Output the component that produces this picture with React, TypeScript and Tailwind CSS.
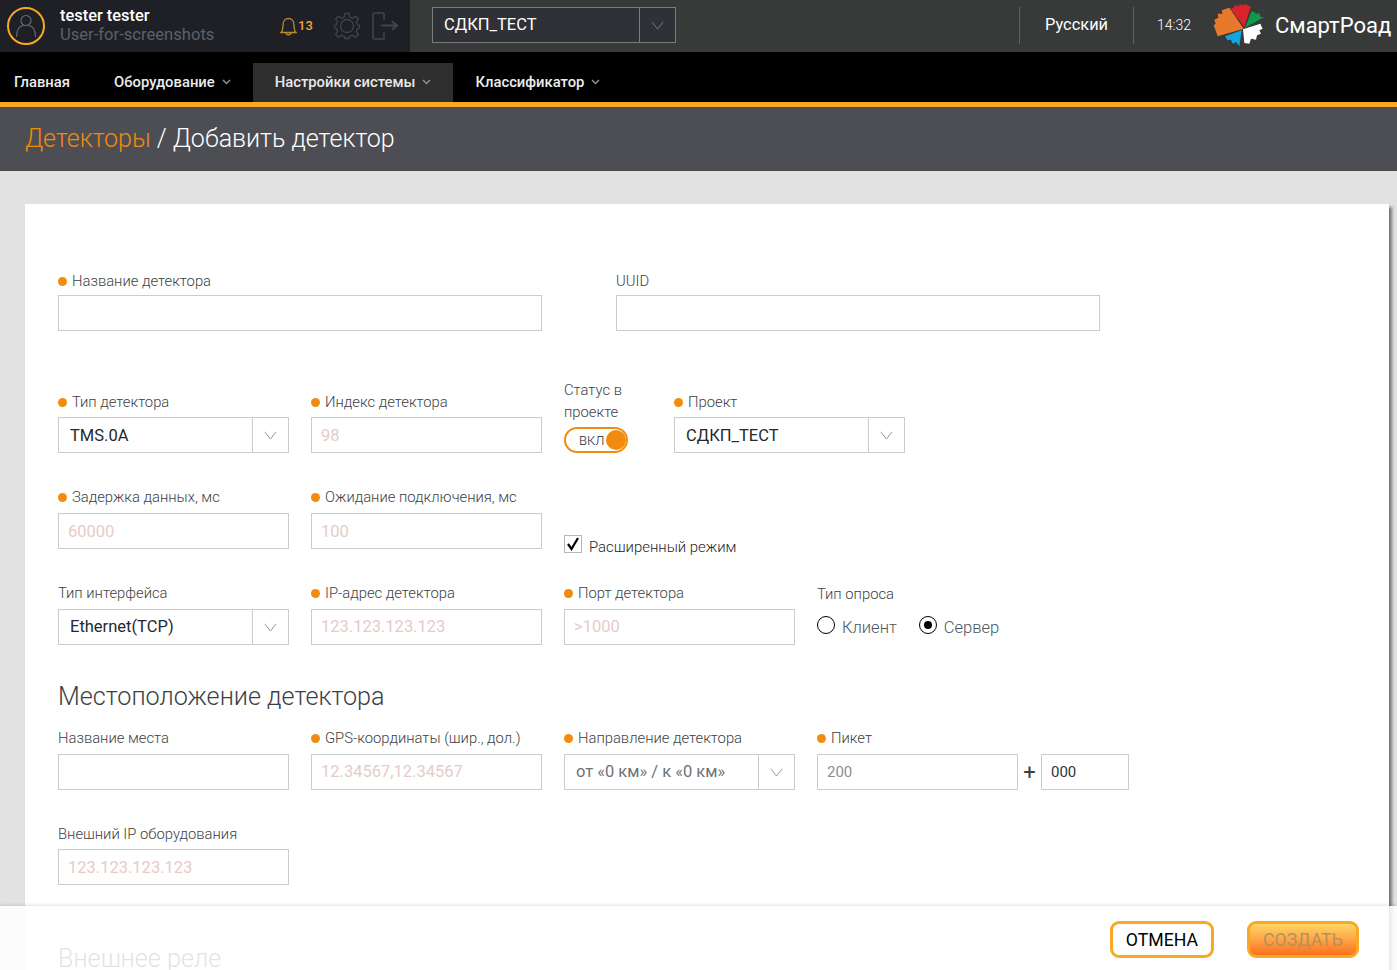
import React from "react";

const font = { fontFamily: '"Roboto", "Liberation Sans", sans-serif' };

function Chevron({ className = "" }: { className?: string }) {
  return (
    <svg width="13" height="9" viewBox="0 0 13 9" fill="none" className={className}>
      <path d="M0.8 0.8 L6.5 8 L12.2 0.8" stroke="currentColor" strokeWidth="0.9" />
    </svg>
  );
}

function SmallChevron() {
  return (
    <svg width="9" height="6" viewBox="0 0 9 6" fill="none" className="ml-[7px] mt-[-2px]">
      <path d="M1 1 L4.5 4.5 L8 1" stroke="#8f8f8f" strokeWidth="1.5" />
    </svg>
  );
}

function Label({ text, req, gap }: { text: string; req?: boolean; gap: string }) {
  return (
    <div className={`flex items-center h-[22px] text-[14.8px] font-light text-[#3d3f45] ${gap}`}>
      {req && <span className="w-[9px] h-[9px] rounded-full bg-[#f28c0f] mr-[5px]" />}
      <span className="pt-[1px]">{text}</span>
    </div>
  );
}

function Input({ value, tone = "ph", w = "w-[231px]", low }: { value?: string; tone?: "ph" | "gray" | "dark"; w?: string; low?: boolean }) {
  const color = tone === "ph" ? "text-[#e6cbc8] text-[16.5px]" : tone === "gray" ? "text-[#8b8e92] text-[15px]" : "text-[#2f3640] text-[15px]";
  return (
    <div className={`${w} h-[36px] border border-[#cccccc] bg-white flex items-center pl-[9px] font-normal ${low ? "pt-[3px]" : "pt-[1px]"} ${color}`}>
      {value}
    </div>
  );
}

function Select({ value, muted, w = "w-[231px]", low }: { value: string; muted?: boolean; w?: string; low?: boolean }) {
  return (
    <div className={`${w} h-[36px] border border-[#cccccc] bg-white flex items-center`}>
      <div className={`flex-1 pl-[11px] text-[16.5px] ${low ? "pt-[3px]" : "pt-[1px]"} ${muted ? "text-[#6f7276]" : "text-[#26282c]"}`}>{value}</div>
      <div className="w-[36px] h-full border-l border-[#cccccc] flex items-center justify-center text-[#8f8f8f]">
        <Chevron />
      </div>
    </div>
  );
}

function Field({ label, req, gap, children }: { label: string; req?: boolean; gap: string; children: React.ReactNode }) {
  return (
    <div>
      <Label text={label} req={req} gap={gap} />
      {children}
    </div>
  );
}

function Logo() {
  return (
    <svg width="52" height="44" viewBox="36 8 156 132" className="ml-[21px]">
      <polygon fill="#e8792b" points="128,85 85,22 62,30 65,40 50,40 52,52 40,58 44,70 38,75 42,85 50,108" />
      <polygon fill="#d9222a" points="130,80 88,25 100,22 100,15 115,18 115,12 130,14 130,10 150,20 145,32" />
      <polygon fill="#0f9a4b" points="132,82 152,33 160,35 165,41 175,38 178,50 190,50" />
      <polygon fill="#ffffff" points="126,87 178,70 185,85 175,90 180,100 168,105 165,118 150,115 145,130 130,128" />
      <polygon fill="#12a5df" points="122,90 72,108 80,120 90,118 95,130 105,125 115,138" />
    </svg>
  );
}

function TopBar() {
  return (
    <div className="h-[52px] flex bg-[#383a3a]">
      <div className="w-[410px] h-full bg-[#1e2025] flex items-center shrink-0">
        <div className="ml-[7px] w-[38px] h-[38px] rounded-full border-2 border-[#f9a825] flex items-center justify-center">
          <svg width="22" height="26" viewBox="0 0 22 26" fill="none" stroke="#6b6e72" strokeWidth="1.1">
            <circle cx="11" cy="7.5" r="5" />
            <path d="M1.5 24 C1.5 16 5 12.5 8.5 12.5 M20.5 24 C20.5 16 17 12.5 13.5 12.5" />
          </svg>
        </div>
        <div className="ml-[15px] w-[215px] pb-[2px] leading-[19px]">
          <div className="text-white font-medium text-[16.4px]">tester tester</div>
          <div className="text-[#5d6065] text-[16.6px]">User-for-screenshots</div>
        </div>
        <svg width="17" height="19" viewBox="0 0 17 19" fill="none" stroke="#b38a35" strokeWidth="1.3" className="ml-[5px]">
          <path d="M1 15.5 C3 13.5 3 11 3 8 C3 4 5.5 1.5 8.5 1.5 C11.5 1.5 14 4 14 8 C14 11 14 13.5 16 15.5 Z" />
          <path d="M6 15.5 C6 18.5 11 18.5 11 15.5" />
        </svg>
        <span className="ml-[1px] text-[13px] font-medium text-[#f9a13a]">13</span>
        <svg width="28" height="28" viewBox="0 0 28 28" fill="none" stroke="#41444a" strokeWidth="1.3" className="ml-[20px]">
          <circle cx="14" cy="14" r="6.5" />
          <path d="M12 1.5 H16 L16.7 5 L19.6 6.2 L22.6 4.2 L25.4 7 L23.4 10 L24.6 12.9 L26.5 13 V16 L24.6 16.6 L23.4 19.5 L25.4 22.5 L22.6 25.3 L19.6 23.3 L16.7 24.5 L16 26.5 H12 L11.3 24.5 L8.4 23.3 L5.4 25.3 L2.6 22.5 L4.6 19.5 L3.4 16.6 L1.5 16 V13 L3.4 12.9 L4.6 10 L2.6 7 L5.4 4.2 L8.4 6.2 L11.3 5 Z" />
        </svg>
        <svg width="27" height="28" viewBox="0 0 27 28" fill="none" stroke="#41444a" strokeWidth="1.5" className="ml-[11px]">
          <path d="M12 1 H3 Q1 1 1 3 V25 Q1 27 3 27 H12 V20 M12 8 V1" />
          <path d="M9 13.5 H24 M20 9.5 L25 13.5 L20 17.5" strokeWidth="2" />
        </svg>
      </div>
      <div className="flex-1 flex items-center pb-[2px]">
        <div className="ml-[22px] w-[244px] h-[36px] border border-[#7a7c7d] bg-[#2f3136] flex items-center text-white text-[16.5px]">
          <div className="flex-1 pl-[11px]">СДКП_ТЕСТ</div>
          <div className="w-[36px] h-full border-l border-[#7a7c7d] flex items-center justify-center text-[#7d7f82]">
            <Chevron />
          </div>
        </div>
        <div className="ml-[343px] w-px h-[37px] bg-[#606263]" />
        <div className="ml-[25px] w-[63px] text-white text-[16.4px] whitespace-nowrap">Русский</div>
        <div className="ml-[25px] w-px h-[37px] bg-[#606263]" />
        <div className="ml-[23px] w-[35px] text-white text-[14px] font-light">14:32</div>
        <Logo />
        <div className="ml-[10px] text-white text-[22px] whitespace-nowrap">СмартРоад</div>
      </div>
    </div>
  );
}

function NavItem({ text, chevron, active, first }: { text: string; chevron?: boolean; active?: boolean; first?: boolean }) {
  return (
    <div
      className={`h-[39px] flex items-center whitespace-nowrap text-[14.8px] font-medium ${first ? "pl-[14px] pr-[22px]" : "px-[22px]"} ${
        active ? "bg-[#2e2e2e] text-[#e8e8e8]" : "text-[#ececec]"
      }`}
    >
      {text}
      {chevron && <SmallChevron />}
    </div>
  );
}

function Nav() {
  return (
    <div className="h-[55px] bg-black border-b-[5px] border-[#f9a825] flex items-end pt-[11px]">
      <NavItem text="Главная" first />
      <NavItem text="Оборудование" chevron />
      <NavItem text="Настройки системы" chevron active />
      <NavItem text="Классификатор" chevron />
    </div>
  );
}

function Form() {
  return (
    <div className="ml-[25px] mt-[33px] w-[1364px] h-[800px] bg-white shadow-[3px_3px_3px_#777777] pt-[66px] pl-[33px]">
      <div className="flex gap-[74px]">
        <Field label="Название детектора" req gap="mb-[3px]"><Input w="w-[484px]" /></Field>
        <Field label="UUID" gap="mb-[3px]"><Input w="w-[484px]" /></Field>
      </div>

      <div className="flex items-end gap-[22px] mt-[48px]">
        <Field label="Тип детектора" req gap="mb-[4px]"><Select value="TMS.0A" low /></Field>
        <Field label="Индекс детектора" req gap="mb-[4px]"><Input value="98" low /></Field>
        <div className="w-[88px]">
          <div className="text-[14.8px] font-light leading-[22px] text-[#3d3f45] w-[70px]">Статус в проекте</div>
          <div className="mt-[4px] w-[64px] h-[26px] rounded-full border-2 border-[#f28c0f] flex items-center pl-[13px]">
            <span className="pt-[2px] text-[13px] font-light text-[#26282c]">ВКЛ</span>
            <span className="ml-[2px] w-[20px] h-[20px] rounded-full bg-[#f28c0f]" />
          </div>
        </div>
        <Field label="Проект" req gap="mb-[4px]"><Select value="СДКП_ТЕСТ" low /></Field>
      </div>

      <div className="flex items-end gap-[22px] mt-[33px]">
        <Field label="Задержка данных, мс" req gap="mb-[5px]"><Input value="60000" low /></Field>
        <Field label="Ожидание подключения, мс" req gap="mb-[5px]"><Input value="100" low /></Field>
        <div className="flex items-center mb-[-16px] h-[36px]">
          <div className="w-[18px] h-[18px] border border-[#b8b8b8] bg-white flex items-center justify-center mt-[-7px]">
            <svg width="14" height="14" viewBox="0 0 14 14" fill="none">
              <path d="M2 7 L5.5 12 L12 1" stroke="#000" strokeWidth="2.2" />
            </svg>
          </div>
          <span className="ml-[7px] text-[14.9px] font-light text-[#26282c]">Расширенный режим</span>
        </div>
      </div>

      <div className="flex items-end gap-[22px] mt-[33px]">
        <Field label="Тип интерфейса" gap="mb-[5px]"><Select value="Ethernet(TCP)" /></Field>
        <Field label="IP-адрес детектора" req gap="mb-[5px]"><Input value="123.123.123.123" /></Field>
        <Field label="Порт детектора" req gap="mb-[5px]"><Input value=">1000" /></Field>
        <div>
          <Label text="Тип опроса" gap="mb-[4px]" />
          <div className="h-[36px] flex items-center text-[16.5px] font-light text-[#4a5560]">
            <span className="w-[18px] h-[18px] rounded-full border border-black bg-white mt-[-4px]" />
            <span className="ml-[7px] pt-[3px]">Клиент</span>
            <span className="ml-[22px] w-[18px] h-[18px] rounded-full border border-black bg-white flex items-center justify-center mt-[-4px]">
              <span className="w-[8px] h-[8px] rounded-full bg-black" />
            </span>
            <span className="ml-[7px] pt-[3px]">Сервер</span>
          </div>
        </div>
      </div>

      <h2 className="mt-[34px] text-[25.2px] leading-[36px] font-light text-[#3d3f45]">Местоположение детектора</h2>

      <div className="flex items-end gap-[22px] mt-[12px]">
        <Field label="Название места" gap="mb-[5px]"><Input /></Field>
        <Field label="GPS-координаты (шир., дол.)" req gap="mb-[5px]"><Input value="12.34567,12.34567" /></Field>
        <Field label="Направление детектора" req gap="mb-[5px]"><Select value="от «0 км» / к «0 км»" muted /></Field>
        <Field label="Пикет" req gap="mb-[5px]">
          <div className="flex items-center">
            <Input value="200" tone="gray" w="w-[201px]" />
            <span className="w-[23px] text-center text-[22px] font-normal text-[#3d3f45]">+</span>
            <Input value="000" tone="dark" w="w-[88px]" />
          </div>
        </Field>
      </div>

      <div className="mt-[33px]">
        <Field label="Внешний IP оборудования" gap="mb-[4px]"><Input value="123.123.123.123" low /></Field>
      </div>

      <h2 className="mt-[56px] text-[25.2px] leading-[36px] font-light text-[#3d3f45]">Внешнее реле</h2>
    </div>
  );
}

export default function App() {
  return (
    <div style={font} className="relative w-[1397px] h-[970px] overflow-hidden bg-[#e2e2e2]">
      <TopBar />
      <Nav />
      <div className="h-[64px] bg-[#4d4e53] flex items-center pl-[25px] text-[25px] font-light text-white">
        <span className="text-[#f08a0d]">Детекторы</span>
        <span className="ml-[6px]">/ Добавить детектор</span>
      </div>
      <Form />
      <div className="absolute left-0 right-0 bottom-0 h-[64px] bg-white/85 shadow-[0_-1px_3px_rgba(0,0,0,0.12)] flex justify-end pt-[15px] pr-[38px] gap-[33px]">
        <div className="w-[104px] h-[37px] rounded-[9px] border-[3px] border-[#f9a825] bg-white flex items-center justify-center pt-[2px] text-[17.7px] text-black">
          ОТМЕНА
        </div>
        <div className="w-[112px] h-[37px] rounded-[9px] border-[3px] border-[#f9a825] bg-gradient-to-b from-[#fdd666] to-[#f96f1c] flex items-center justify-center pt-[2px] text-[17.7px] text-[#b3925c]">
          СОЗДАТЬ
        </div>
      </div>
    </div>
  );
}
